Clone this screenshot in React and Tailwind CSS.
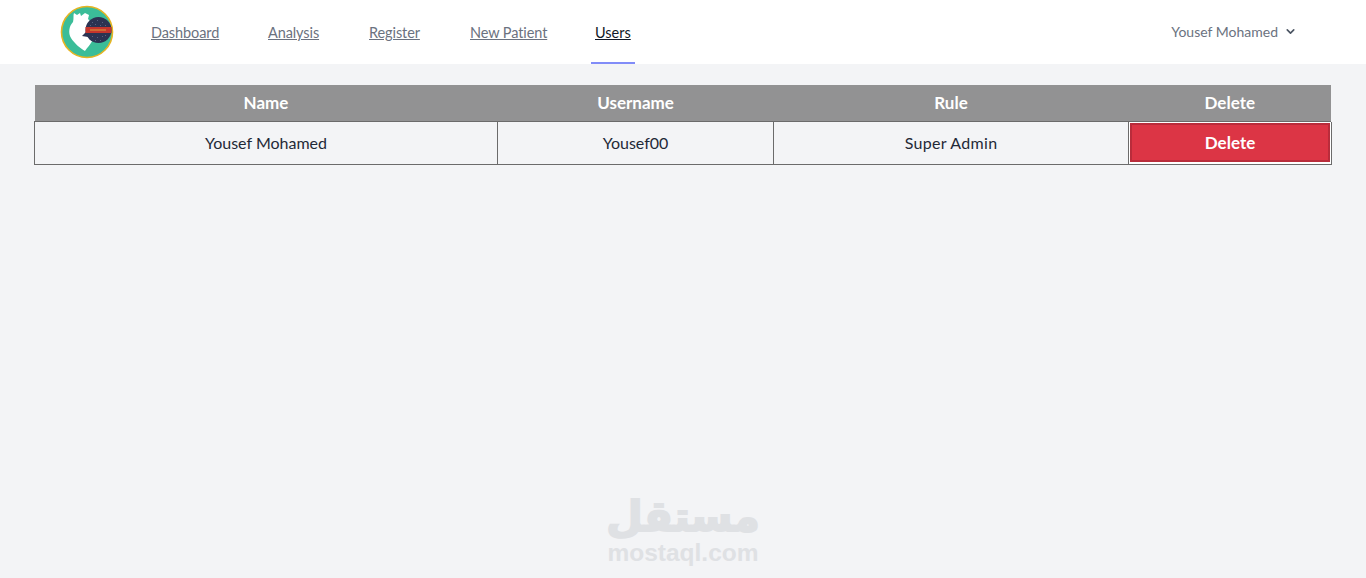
import React from "react";
import { ChevronDown } from "lucide-react";

const links = [
  { label: "Dashboard", width: "w-[69px]" },
  { label: "Analysis", width: "w-[53px]" },
  { label: "Register", width: "w-[53px]" },
  { label: "New Patient", width: "w-[77px]" },
];

const dots = [
  [32, 17], [37, 15], [42, 17], [45, 20], [30, 20], [35, 19], [40, 20],
  [32, 31], [37, 32], [42, 31], [45, 30], [35, 35], [40, 35],
];

const Logo = () => (
  <svg width="54" height="54" viewBox="0 0 54 54" className="shrink-0">
    <circle cx="27" cy="27" r="25.5" fill="#3bbd98" stroke="#e6b422" strokeWidth="1.6" />
    <path
      d="M13 17 C14 13 13 10 14 8 L17 10 L20 8 L21 11 L25 8 L29 10 L28 14 L31 17 C34 22 36 28 33 35 C30 40 26 44 25 46 C21 44 14 38 11 33 C8 28 9 21 13 17 Z"
      fill="#fff"
    />
    <circle cx="38.5" cy="25" r="13" fill="#2c3352" />
    <path d="M28 32 L22 31 L27 26 Z" fill="#2c3352" />
    <rect x="25.5" y="22" width="26" height="6" fill="#c5352c" />
    <rect x="30" y="24.5" width="16" height="1" fill="#d9a03a" />
    {dots.map(([x, y]) => (
      <rect key={`${x}-${y}`} x={x} y={y} width="1" height="1" fill="#5a6280" />
    ))}
  </svg>
);

export default function App() {
  return (
    <div className="relative min-h-screen bg-[#f3f4f6] font-['Lato','Noto_Sans',sans-serif]">
      {/* TOP BAR */}
      <nav className="flex h-16 items-center bg-white pl-[60px] pr-[69px]">
        <Logo />
        <div className="ml-[37px] flex h-full items-center gap-12 text-[14.5px] text-[#6b7280]">
          {links.map((l) => (
            <a key={l.label} className={`${l.width} whitespace-nowrap pt-[1px] tracking-[-0.1px] underline`}>
              {l.label}
            </a>
          ))}
          <div className="-mx-1 flex h-full items-center border-b-2 border-[#818cf8] px-1 pt-[3px] text-[#111827]">
            <a className="w-9 whitespace-nowrap underline">Users</a>
          </div>
        </div>
        <div className="ml-auto mb-[2px] flex items-center gap-[6px] text-[14px] text-[#6b7280]">
          <span>Yousef Mohamed</span>
          <ChevronDown size={13} strokeWidth={3} className="text-[#4b5563]" />
        </div>
      </nav>

      {/* USERS TABLE */}
      <div className="pl-[34px] pr-[34px] pt-[21px]">
        <table className="w-[1298px] table-fixed border-collapse text-center text-[17px] text-[#1f2937]">
          <thead>
            <tr className="h-[36px] bg-[#929293] font-bold text-white">
              <th className="w-[463px]">Name</th>
              <th className="w-[276px]">Username</th>
              <th className="w-[355px]">Rule</th>
              <th className="border-r border-[#f3f4f6]">Delete</th>
            </tr>
          </thead>
          <tbody>
            <tr className="h-[43px]">
              <td className="border border-[#6b6b6b] text-[16px]">Yousef Mohamed</td>
              <td className="border border-[#6b6b6b] text-[16px]">Yousef00</td>
              <td className="border border-[#6b6b6b] text-[16px] tracking-[0.3px]">Super Admin</td>
              <td className="border border-[#6b6b6b] bg-white p-[1px]">
                <button className="h-[39px] w-full border-2 border-[#b92c3b] bg-[#dc3545] font-bold text-white">
                  Delete
                </button>
              </td>
            </tr>
          </tbody>
        </table>
      </div>

      {/* WATERMARK */}
      <div className="absolute bottom-[12px] left-[607px] flex w-[152px] flex-col items-center font-bold text-[#dfe1e4]">
        <span className="mb-[1px] h-[44px] text-[42px] leading-[44px] font-['DejaVu_Sans',sans-serif] [-webkit-text-stroke:2px_#dfe1e4]">
          مستقل
        </span>
        <span className="whitespace-nowrap text-[24.5px] leading-[26px] font-['Liberation_Sans',sans-serif]">
          mostaql.com
        </span>
      </div>
    </div>
  );
}
